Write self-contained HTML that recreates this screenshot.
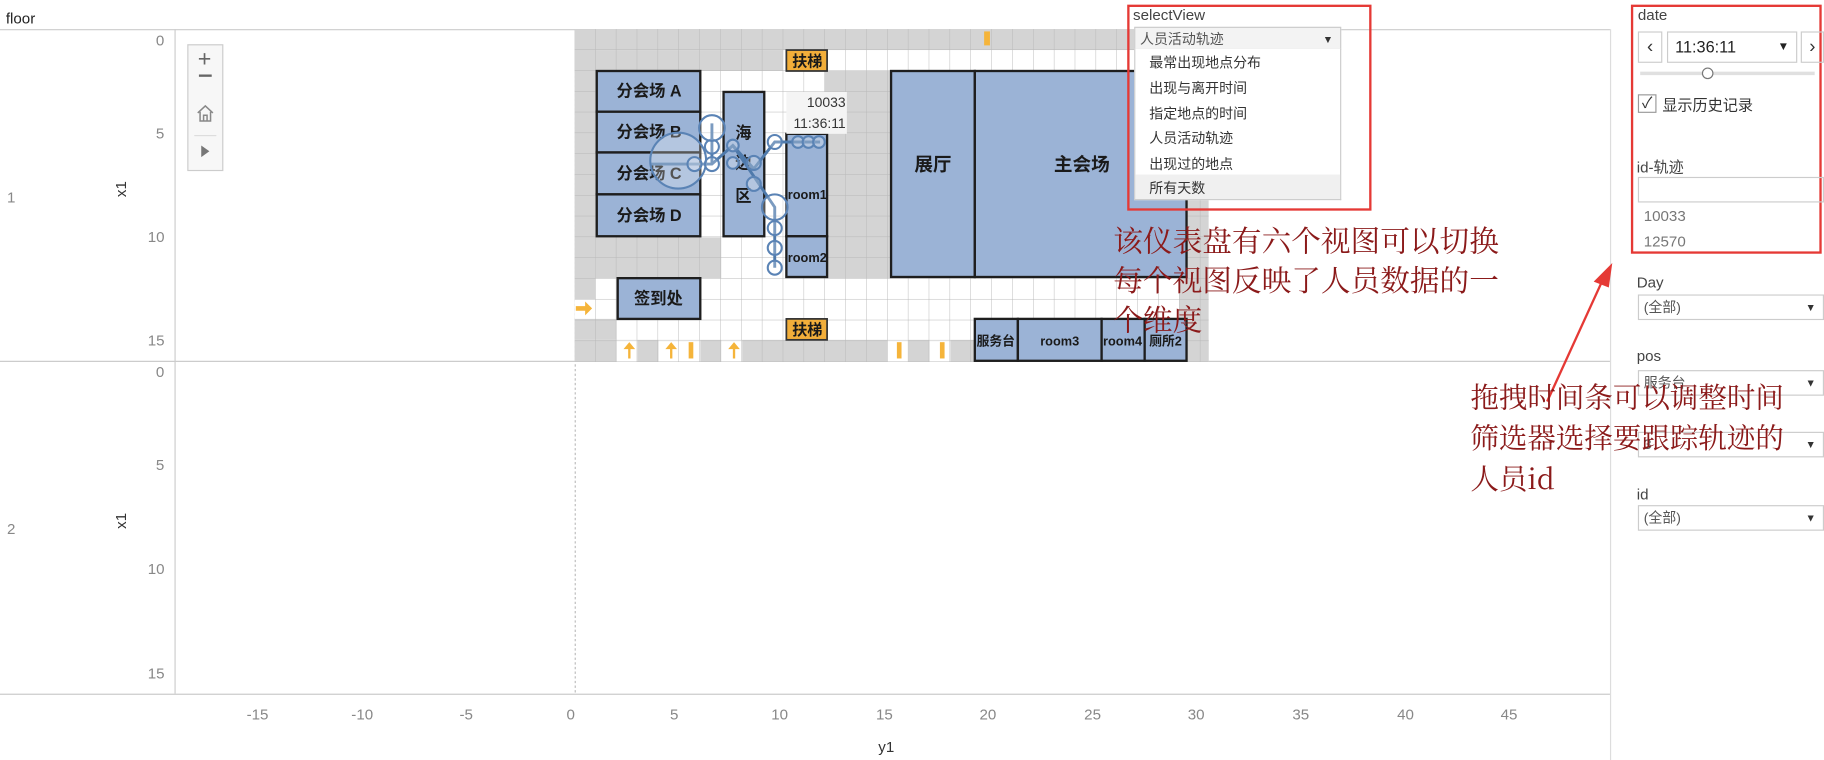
<!DOCTYPE html>
<html><head><meta charset="utf-8">
<style>
html,body{margin:0;padding:0;background:#fff;overflow:hidden;width:1824px;height:760px}
#w{position:absolute;left:0;top:0;width:1568px;height:653px;transform:scale(1.16327,1.16386);transform-origin:0 0;font-family:"Liberation Sans","Noto Sans CJK SC",sans-serif;color:#333}
.a{position:absolute;white-space:nowrap}
.t{font-size:13px;color:#888}
.sel{position:absolute;border:1px solid #ccc;background:#fff;font-size:12px;height:20px;line-height:20px;box-sizing:border-box;padding-left:4px;color:#555}
.sel:after{content:"▼";position:absolute;right:6px;top:0;font-size:9px;color:#333}
.lbl{position:absolute;font-size:13px;color:#444}
.ann{position:absolute;font-family:"Noto Serif CJK SC","WenQuanYi Zen Hei",serif;color:#8b1a1a;font-size:25.5px;line-height:34px;white-space:nowrap}
.it{position:absolute;left:12px;font-size:12px;color:#333}
</style></head><body><div id="w">
<svg width="1568" height="653" style="position:absolute;left:0;top:0">
<defs>
<pattern id="g" x="494" y="25" width="17.93" height="17.87" patternUnits="userSpaceOnUse">
<path d="M17.93 0V17.87H0" fill="none" stroke="#b8b8b8" stroke-width="0.8"/>
</pattern>
</defs>
<line x1="0" y1="25.5" x2="1384" y2="25.5" stroke="#ccc"/>
<line x1="0" y1="310.5" x2="1384" y2="310.5" stroke="#ccc"/>
<line x1="0" y1="596.5" x2="1384" y2="596.5" stroke="#ccc"/>
<line x1="150.5" y1="25" x2="150.5" y2="596" stroke="#ccc"/>
<line x1="1384.5" y1="25" x2="1384.5" y2="653" stroke="#ddd"/>
<line x1="494.5" y1="25" x2="494.5" y2="596" stroke="#bbb" stroke-dasharray="2,2"/>
<rect x="494" y="25" width="545" height="286" fill="#fff"/>
<g fill="#d4d4d4">
<rect x="494" y="25" width="545" height="18"/>
<rect x="494" y="43" width="179" height="18"/>
<rect x="494" y="25" width="18" height="232"/>
<rect x="512" y="204" width="108" height="35"/>
<rect x="709" y="61" width="57" height="178"/>
<rect x="494" y="274" width="36" height="18"/>
<rect x="494" y="292" width="545" height="19"/>
<rect x="1014" y="25" width="25" height="286"/>
</g>
<g fill="#fff">
<rect x="530" y="292" width="18" height="19"/>
<rect x="566" y="292" width="36" height="19"/>
<rect x="620" y="292" width="18" height="19"/>
<rect x="763" y="292" width="18" height="19"/>
<rect x="799" y="292" width="18" height="19"/>
</g>
<rect x="494" y="25" width="545" height="286" fill="url(#g)"/>
<g fill="#9bb3d6" stroke="#1e1e1e" stroke-width="2">
<rect x="513" y="61" width="89" height="35"/>
<rect x="513" y="96" width="89" height="35"/>
<rect x="513" y="131" width="89" height="36"/>
<rect x="513" y="167" width="89" height="36"/>
<rect x="622" y="79" width="35" height="124"/>
<rect x="676" y="115" width="35" height="88"/>
<rect x="676" y="203" width="35" height="35"/>
<rect x="531" y="239" width="71" height="35"/>
<rect x="766" y="61" width="72" height="177"/>
<rect x="838" y="61" width="182" height="177"/>
<rect x="838" y="274" width="37" height="36"/>
<rect x="875" y="274" width="72" height="36"/>
<rect x="947" y="274" width="37" height="36"/>
<rect x="984" y="274" width="36" height="36"/>
</g>
<g fill="#f2ae3a" stroke="#333" stroke-width="1.5">
<rect x="676" y="43" width="35" height="18"/>
<rect x="676" y="274" width="35" height="18"/>
</g>
<g font-family="Liberation Sans,Noto Sans CJK SC,sans-serif" fill="#1a1a1a" font-weight="bold" text-anchor="middle">
<text x="558" y="83" font-size="14">分会场 A</text>
<text x="558" y="118" font-size="14">分会场 B</text>
<text x="558" y="154" font-size="14">分会场 C</text>
<text x="558" y="190" font-size="14">分会场 D</text>
<text x="639" y="119" font-size="14">海</text>
<text x="639" y="145" font-size="14">边</text>
<text x="639" y="173" font-size="14">区</text>
<text x="694" y="171" font-size="11">room1</text>
<text x="694" y="225" font-size="11">room2</text>
<text x="566" y="261" font-size="14">签到处</text>
<text x="802" y="147" font-size="16">展厅</text>
<text x="930" y="147" font-size="16">主会场</text>
<text x="856" y="297" font-size="11">服务台</text>
<text x="911" y="297" font-size="11">room3</text>
<text x="965" y="297" font-size="11">room4</text>
<text x="1002" y="297" font-size="11">厕所2</text>
<text x="694" y="57" font-size="13">扶梯</text>
<text x="694" y="288" font-size="13">扶梯</text>
</g>
<g fill="#f5b43a">
<path d="M540 308v-8h-4l5-6 5 6h-4v8z"/>
<path d="M576 308v-8h-4l5-6 5 6h-4v8z"/>
<path d="M630 308v-8h-4l5-6 5 6h-4v8z"/>
<rect x="592" y="294" width="4" height="14"/>
<rect x="771" y="294" width="4" height="14"/>
<rect x="808" y="294" width="4" height="14"/>
<rect x="846" y="27" width="5" height="12"/>
<path d="M495 263h8v-4l6 6-6 6v-4h-8z"/>
</g>
<rect x="676" y="79" width="52" height="36" fill="#f4f4f4"/>
<text x="727" y="92" font-size="12" text-anchor="end" fill="#333" font-family="Liberation Sans,sans-serif">10033</text>
<text x="727" y="110" font-size="12" text-anchor="end" fill="#333" font-family="Liberation Sans,sans-serif">11:36:11</text>
<g stroke="#4f7aab" stroke-width="2.5" fill="none">
<polyline points="560,141 612,141 630,125 648,145 666,122 705,122"/>
<line x1="612" y1="106" x2="612" y2="141"/>
<polyline points="630,125 666,178 666,230"/>
</g>
<g stroke="#5a83b5" stroke-width="1.8" fill="rgba(255,255,255,0.25)">
<circle cx="583" cy="138" r="24"/>
<circle cx="597" cy="141" r="6"/>
<circle cx="612" cy="141" r="6"/>
<circle cx="612" cy="126" r="6"/>
<circle cx="612" cy="110" r="11"/>
<circle cx="630" cy="125" r="5"/>
<circle cx="630" cy="140" r="5"/>
<circle cx="648" cy="140" r="6"/>
<circle cx="648" cy="158" r="6"/>
<circle cx="666" cy="122" r="6"/>
<circle cx="686" cy="122" r="5"/>
<circle cx="695" cy="122" r="5"/>
<circle cx="704" cy="122" r="5"/>
<circle cx="666" cy="178" r="11"/>
<circle cx="666" cy="196" r="6"/>
<circle cx="666" cy="213" r="6"/>
<circle cx="666" cy="230" r="6"/>
</g>
<rect x="970" y="5" width="208" height="175" fill="none" stroke="#e53935" stroke-width="2"/>
<rect x="1403" y="5" width="162" height="212" fill="none" stroke="#e53935" stroke-width="2"/>
<line x1="1330" y1="345" x2="1378" y2="240" stroke="#e53935" stroke-width="2"/>
<path d="M1386 226 L1370 242 L1383 247 Z" fill="#e53935"/>
<line x1="1410" y1="63" x2="1560" y2="63" stroke="#e0e0e0" stroke-width="3"/>
<circle cx="1468" cy="63" r="4.5" fill="#fff" stroke="#777"/>
</svg>

<div class="a" style="left:5px;top:8px;font-size:13px;color:#222">floor</div>
<div class="a t" style="left:6px;top:162px">1</div>
<div class="a t" style="left:6px;top:447px">2</div>
<div class="a" style="left:97px;top:155px;font-size:13px;color:#333;transform:rotate(-90deg)">x1</div>
<div class="a" style="left:97px;top:440px;font-size:13px;color:#333;transform:rotate(-90deg)">x1</div>
<div class="a t" style="left:134px;top:27px">0</div>
<div class="a t" style="left:134px;top:107px">5</div>
<div class="a t" style="left:127px;top:196px">10</div>
<div class="a t" style="left:127px;top:285px">15</div>
<div class="a t" style="left:134px;top:312px">0</div>
<div class="a t" style="left:134px;top:392px">5</div>
<div class="a t" style="left:127px;top:481px">10</div>
<div class="a t" style="left:127px;top:571px">15</div>
<div class="a t" style="left:212px;top:606px">-15</div>
<div class="a t" style="left:302px;top:606px">-10</div>
<div class="a t" style="left:395px;top:606px">-5</div>
<div class="a t" style="left:487px;top:606px">0</div>
<div class="a t" style="left:576px;top:606px">5</div>
<div class="a t" style="left:663px;top:606px">10</div>
<div class="a t" style="left:753px;top:606px">15</div>
<div class="a t" style="left:842px;top:606px">20</div>
<div class="a t" style="left:932px;top:606px">25</div>
<div class="a t" style="left:1021px;top:606px">30</div>
<div class="a t" style="left:1111px;top:606px">35</div>
<div class="a t" style="left:1201px;top:606px">40</div>
<div class="a t" style="left:1290px;top:606px">45</div>
<div class="a" style="left:755px;top:634px;font-size:13px;color:#333">y1</div>

<div class="a" style="left:161px;top:38px;width:29px;height:107px;border:1px solid #ccc;background:#f7f7f7">
<div class="a" style="left:8px;top:1px;font-size:20px;color:#666">+</div>
<div class="a" style="left:9px;top:25px;width:11px;height:2px;background:#666"></div>
<svg class="a" style="left:6px;top:50px" width="17" height="17"><path d="M2 8L8.5 2 15 8M4 7v8h9V7M7 15v-5h3v5" fill="none" stroke="#888" stroke-width="1.3"/></svg>
<div class="a" style="left:5px;top:77px;width:19px;height:1px;background:#ddd"></div>
<svg class="a" style="left:10px;top:85px" width="10" height="12"><path d="M1 1L8 6 1 11z" fill="#777"/></svg>
</div>

<div class="lbl" style="left:974px;top:5px">selectView</div>
<div class="sel" style="left:975px;top:23px;width:178px;background:#f3f3f3">人员活动轨迹</div>
<div class="a" style="left:975px;top:42px;width:178px;height:130px;border:1px solid #ccc;border-top:none;box-sizing:border-box;background:#fff">
<div class="it" style="top:3px">最常出现地点分布</div>
<div class="it" style="top:25px">出现与离开时间</div>
<div class="it" style="top:47px">指定地点的时间</div>
<div class="it" style="top:68px">人员活动轨迹</div>
<div class="it" style="top:90px">出现过的地点</div>
<div class="a" style="left:0;top:108px;width:176px;height:21px;background:#f0f0f0"></div>
<div class="it" style="top:111px">所有天数</div>
</div>

<div class="ann" style="left:957px;top:189px">该仪表盘有六个视图可以切换<br>每个视图反映了人员数据的一<br>个维度</div>

<div class="lbl" style="left:1408px;top:5px">date</div>
<div class="a" style="left:1408px;top:27px;width:21px;height:27px;border:1px solid #ccc;box-sizing:border-box;text-align:center;font-size:16px;line-height:25px;color:#333">‹</div>
<div class="a" style="left:1433px;top:27px;width:112px;height:27px;border:1px solid #ccc;box-sizing:border-box;font-size:14px;line-height:25px;padding-left:6px;color:#222">11:36:11<span style="position:absolute;right:6px;font-size:10px">▼</span></div>
<div class="a" style="left:1548px;top:27px;width:20px;height:27px;border:1px solid #ccc;box-sizing:border-box;text-align:center;font-size:16px;line-height:25px;color:#333">›</div>
<div class="a" style="left:1408px;top:81px;width:14px;height:14px;border:1px solid #999;font-size:13px;line-height:14px;text-align:center;color:#333">✓</div>
<div class="a" style="left:1429px;top:80px;font-size:13px;color:#333">显示历史记录</div>
<div class="lbl" style="left:1407px;top:133px">id-轨迹</div>
<div class="a" style="left:1408px;top:152px;width:160px;height:22px;border:1px solid #ccc;box-sizing:border-box"></div>
<div class="a" style="left:1413px;top:178px;font-size:13px;color:#777">10033</div>
<div class="a" style="left:1413px;top:200px;font-size:13px;color:#777">12570</div>
<div class="lbl" style="left:1407px;top:235px">Day</div>
<div class="sel" style="left:1408px;top:253px;width:160px;height:22px;line-height:21px">(全部)</div>
<div class="lbl" style="left:1407px;top:298px">pos</div>
<div class="sel" style="left:1408px;top:318px;width:160px;height:22px;line-height:21px">服务台</div>
<div class="sel" style="left:1408px;top:371px;width:160px;height:22px;line-height:21px">3</div>
<div class="lbl" style="left:1407px;top:417px">id</div>
<div class="sel" style="left:1408px;top:434px;width:160px;height:22px;line-height:21px">(全部)</div>

<div class="ann" style="left:1264px;top:323px;line-height:35px;font-size:24.5px">拖拽时间条可以调整时间<br>筛选器选择要跟踪轨迹的<br>人员id</div>
</div></body></html>
